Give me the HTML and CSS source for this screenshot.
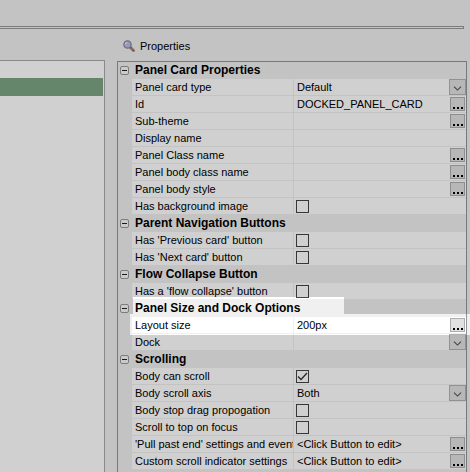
FILE: index.html
```html
<!DOCTYPE html>
<html lang="en">
<head>
<meta charset="utf-8">
<title>Properties</title>
<link rel="stylesheet" href="styles.css">
</head>
<body>
<svg class="defs" aria-hidden="true">
  <symbol id="chevron" viewBox="0 0 17 16"><path d="M4.500 7.500l4 4 4-4" fill="none" stroke="#555" stroke-width="1.300"/></symbol>
</svg>
<div class="divider"></div>
<main class="workspace">
  <section class="outline" aria-label="Outline"><div class="outline-selected"></div></section>
  <section class="properties">
    <h1 class="caption">
      <svg class="lens" viewBox="0 0 12 12" aria-hidden="true">
        <path d="M7.500 7.500l3 3" stroke="#8b7468" stroke-width="2.600" stroke-linecap="round"/>
        <path d="M8.500 8l2 2" stroke="#d0a078" stroke-width="1"/>
        <circle cx="4.500" cy="4.500" r="3.700" fill="#bcbce8" stroke="#85859a" stroke-width="1.200"/>
        <path d="M2.500 4.500q0-2 2-2" fill="none" stroke="#e8e8ff" stroke-width="1.200"/>
      </svg>
      Properties
    </h1>
    <div class="sheet">
      <table class="grid">
        <colgroup><col class="col-gutter"><col class="col-name"><col></colgroup>
        <tbody>
          <tr class="group"><td><button class="toggle" aria-label="Collapse Panel Card Properties"></button></td><th colspan="2">Panel Card Properties</th></tr>
          <tr><td></td><th><label for="type">Panel card type</label></th><td><div class="field"><select id="type"><option>Default</option></select><svg class="drop"><use href="#chevron"/></svg></div></td></tr>
          <tr><td></td><th><label for="id">Id</label></th><td><div class="field"><input class="text" id="id" value="DOCKED_PANEL_CARD"><button class="more" aria-label="Edit id"><i></i><i></i><i></i></button></div></td></tr>
          <tr><td></td><th><label for="sub">Sub-theme</label></th><td><div class="field"><input class="text" id="sub"><button class="more" aria-label="Edit sub-theme"><i></i><i></i><i></i></button></div></td></tr>
          <tr><td></td><th><label for="display">Display name</label></th><td><div class="field"><input class="text" id="display"></div></td></tr>
          <tr><td></td><th><label for="cls">Panel Class name</label></th><td><div class="field"><input class="text" id="cls"><button class="more" aria-label="Edit class name"><i></i><i></i><i></i></button></div></td></tr>
          <tr><td></td><th><label for="bodycls">Panel body class name</label></th><td><div class="field"><input class="text" id="bodycls"><button class="more" aria-label="Edit body class name"><i></i><i></i><i></i></button></div></td></tr>
          <tr><td></td><th><label for="style">Panel body style</label></th><td><div class="field"><input class="text" id="style"><button class="more" aria-label="Edit body style"><i></i><i></i><i></i></button></div></td></tr>
          <tr><td></td><th><label for="bg">Has background image</label></th><td><div class="field"><input class="check" type="checkbox" id="bg"></div></td></tr>
          <tr class="group"><td><button class="toggle" aria-label="Collapse Parent Navigation Buttons"></button></td><th colspan="2">Parent Navigation Buttons</th></tr>
          <tr><td></td><th><label for="prev">Has 'Previous card' button</label></th><td><div class="field"><input class="check" type="checkbox" id="prev"></div></td></tr>
          <tr><td></td><th><label for="next">Has 'Next card' button</label></th><td><div class="field"><input class="check" type="checkbox" id="next"></div></td></tr>
          <tr class="group"><td><button class="toggle" aria-label="Collapse Flow Collapse Button"></button></td><th colspan="2">Flow Collapse Button</th></tr>
          <tr><td></td><th><label for="flow">Has a 'flow collapse' button</label></th><td><div class="field"><input class="check" type="checkbox" id="flow"></div></td></tr>
          <tr class="group"><td><button class="toggle" aria-label="Collapse Panel Size and Dock Options"></button></td><th colspan="2">Panel Size and Dock Options</th></tr>
          <tr><td></td><th><label for="size">Layout size</label></th><td><div class="field"><input class="text" id="size" value="200px"><button class="more" aria-label="Edit layout size"><i></i><i></i><i></i></button></div></td></tr>
          <tr><td></td><th><label for="dock">Dock</label></th><td><div class="field"><select id="dock"><option></option></select><svg class="drop"><use href="#chevron"/></svg></div></td></tr>
          <tr class="group"><td><button class="toggle" aria-label="Collapse Scrolling"></button></td><th colspan="2">Scrolling</th></tr>
          <tr><td></td><th><label for="scroll">Body can scroll</label></th><td><div class="field"><input class="check" type="checkbox" id="scroll" checked></div></td></tr>
          <tr><td></td><th><label for="axis">Body scroll axis</label></th><td><div class="field"><select id="axis"><option>Both</option></select><svg class="drop"><use href="#chevron"/></svg></div></td></tr>
          <tr><td></td><th><label for="drag">Body stop drag propogation</label></th><td><div class="field"><input class="check" type="checkbox" id="drag"></div></td></tr>
          <tr><td></td><th><label for="focus">Scroll to top on focus</label></th><td><div class="field"><input class="check" type="checkbox" id="focus"></div></td></tr>
          <tr><td></td><th><label for="pull">'Pull past end' settings and events</label></th><td><div class="field"><input class="text" id="pull" value="&lt;Click Button to edit&gt;"><button class="more" aria-label="Edit pull past end"><i></i><i></i><i></i></button></div></td></tr>
          <tr><td></td><th><label for="indicator">Custom scroll indicator settings</label></th><td><div class="field"><input class="text" id="indicator" value="&lt;Click Button to edit&gt;"><button class="more" aria-label="Edit scroll indicator"><i></i><i></i><i></i></button></div></td></tr>
        </tbody>
      </table>
    </div>
  </section>
</main>
<div class="spotlight"></div>
</body>
</html>
```
FILE: styles.css
```css
* { box-sizing: border-box; }

body {
  display: flex;
  flex-direction: column;
  position: relative;
  height: 100vh;
  margin: 0;
  padding-top: 26px;
  overflow: hidden;
  background: #f0f0f0;
  color: #000;
  font: 11px/16px "Liberation Sans", Arial, sans-serif;
}

.defs { position: absolute; width: 0; height: 0; }

.divider {
  flex: none;
  height: 3px;
  margin-right: 6px;
  border: 1px solid #98989c;
  border-left: 0;
  background: #f0f0f0;
}

.workspace {
  flex: 1;
  display: flex;
  gap: 12px;
  min-height: 0;
  padding-right: 3px;
}

.outline {
  flex: none;
  width: 105px;
  margin-top: 31px;
  padding: 17px 1px 0 0;
  border: 1px solid #aaaaae;
  border-width: 1px 1px 0 0;
  background: #fff;
}

.outline-selected { height: 18px; background: #7ea584; }

.properties {
  flex: 1;
  display: flex;
  flex-direction: column;
  min-width: 0;
}

.caption {
  flex: none;
  display: flex;
  align-items: center;
  gap: 5px;
  height: 32px;
  margin: 0;
  padding: 2px 6px 0;
  font-size: 11px;
  font-weight: 400;
}

.lens { width: 12px; height: 12px; }

.sheet {
  flex: 1;
  min-height: 0;
  border: 1px solid #94949c;
  border-bottom: 0;
}

.grid {
  width: 100%;
  table-layout: fixed;
  border-spacing: 0;
}

.col-gutter { width: 14px; }
.col-name { width: 162px; }

.grid tr { height: 17px; }

.grid td,
.grid th {
  height: 17px;
  padding: 0;
  border-bottom: 1px solid #f0f0f0;
  background: #fff;
  font-weight: 400;
  text-align: left;
  vertical-align: top;
  white-space: nowrap;
  overflow: hidden;
}

.grid th { padding-left: 3px; border-right: 1px solid #f0f0f0; }
.grid td:first-child { background: #f0f0f0; }
.grid .group th { background: #f0f0f0; font-size: 12px; font-weight: 700; }
.grid label { display: block; overflow: hidden; }

.toggle {
  display: block;
  width: 9px;
  height: 9px;
  margin: 4px 0 0 2px;
  padding: 3px 1px;
  border: 1px solid #999;
  border-radius: 2px;
  background: #f8f8f8;
}

.toggle::before {
  content: "";
  display: block;
  height: 1px;
  background: #222;
}

.field {
  display: flex;
  align-items: flex-start;
  position: relative;
  height: 16px;
}

.text,
select {
  appearance: none;
  flex: 1;
  min-width: 0;
  height: 16px;
  margin: 0;
  padding: 0 3px;
  border: 0;
  background: transparent;
  color: inherit;
  font: inherit;
}

.drop {
  position: absolute;
  right: 0;
  top: 0;
  width: 17px;
  height: 16px;
  border: 1px solid #b2b2b2;
  background: #e1e1e1;
  pointer-events: none;
}

.more {
  display: flex;
  justify-content: center;
  align-items: flex-end;
  gap: 2px;
  width: 15px;
  height: 14px;
  margin: 1px 1px 0 0;
  padding: 0 0 1px;
  border: 1px solid #adadad;
  background: #e1e1e1;
}

.more i { width: 2px; height: 2px; background: #000; }

.check {
  appearance: none;
  width: 13px;
  height: 13px;
  margin: 2px;
  border: 1px solid #444;
  background: #fff;
}

.check:checked {
  background: #fff url("data:image/svg+xml,%3Csvg xmlns='http://www.w3.org/2000/svg' viewBox='0 0 11 11'%3E%3Cpath d='M1 5.500l3 3 6-6.500' fill='none' stroke='%23333' stroke-width='1.300'/%3E%3C/svg%3E");
}

/* Dims the whole page except the docked-size group title and its first row. */
.spotlight {
  position: absolute;
  inset: 0;
  background: rgba(0, 0, 0, .185);
  pointer-events: none;
  clip-path: polygon(0 0, 100% 0, 100% 314px, 344px 314px, 344px 297px, 133px 297px, 133px 314px, 130px 314px, 130px 335px, 100% 335px, 100% 100%, 0 100%);
}
```
